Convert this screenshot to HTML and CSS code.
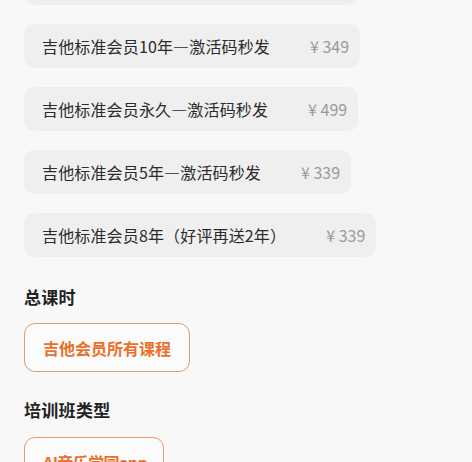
FILE: index.html
```html
<!DOCTYPE html>
<html lang="zh">
<head>
<meta charset="utf-8">
<link rel="stylesheet" href="styles.css">
</head>
<body>
<div class="page">
  <div class="sku-list">
    <div class="sku sku-first"><span class="sku-name">吉他标准会员3年—激活码秒发</span><span class="sku-price">¥ 299</span></div>
    <div class="sku"><span class="sku-name">吉他标准会员10年—激活码秒发</span><span class="sku-price">¥ 349</span></div>
    <div class="sku"><span class="sku-name">吉他标准会员永久—激活码秒发</span><span class="sku-price">¥ 499</span></div>
    <div class="sku"><span class="sku-name">吉他标准会员5年—激活码秒发</span><span class="sku-price">¥ 339</span></div>
    <div class="sku"><span class="sku-name">吉他标准会员8年（好评再送2年）</span><span class="sku-price">¥ 339</span></div>
  </div>
  <div class="group group-hours">
    <div class="group-title">总课时</div>
    <div class="option">吉他会员所有课程</div>
  </div>
  <div class="group group-type">
    <div class="group-title">培训班类型</div>
    <div class="option option-narrow">AI音乐学园app</div>
  </div>
</div>
</body>
</html>
```
FILE: styles.css
```css
html, body {
  margin: 0;
  padding: 0;
  background: #f8f8f8;
}
body {
  font-family: "Noto Sans CJK SC", "Noto Sans", sans-serif;
  color: #333;
  overflow: hidden;
  height: 462px;
}
.page {
  padding-left: 24px;
}
.sku-list {
  display: flex;
  flex-direction: column;
  align-items: flex-start;
  gap: 19px;
  margin-top: -39px;
}
.sku {
  display: flex;
  align-items: center;
  height: 44px;
  padding: 0 11px 0 18px;
  gap: 40px;
  background: #efefef;
  border-radius: 10px;
  font-size: 16px;
}
.sku-first {
  width: 333px;
  box-sizing: border-box;
  justify-content: space-between;
}
.sku-name {
  color: #2b2b2b;
  letter-spacing: 0.15px;
}
.sku-price {
  color: #9a9a9a;
}
.group-title {
  font-size: 17px;
  font-weight: 700;
  line-height: 22px;
  letter-spacing: 0.3px;
  color: #222;
}
.group-hours {
  margin-top: 29px;
}
.group-type {
  margin-top: 27px;
}
.option {
  display: inline-flex;
  align-items: center;
  box-sizing: border-box;
  height: 49px;
  padding: 0 18px;
  margin-top: 15px;
  border: 1.5px solid #e49a6a;
  border-radius: 11px;
  color: #e8702a;
  font-size: 16px;
  font-weight: 600;
  background: #fbfbfb;
}
.group-type .option {
  margin-top: 16px;
}
.option-narrow {
  letter-spacing: -0.6px;
  padding: 0 16px 0 18px;
}
```
